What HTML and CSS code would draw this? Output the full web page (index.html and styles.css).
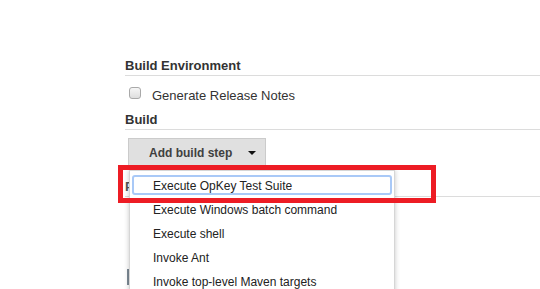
FILE: index.html
```html
<html>
<head>
<meta charset="utf-8">
<title>Build configuration</title>
<link rel="stylesheet" href="styles.css">
</head>
<body>
<div class="config">
<div class="section-header first">Build Environment</div>
<div class="option-row">
<input type="checkbox" class="checkbox" id="relnotes">
<label for="relnotes">Generate Release Notes</label>
</div>
<div class="section-header">Build</div>
<div class="button-row">
<span class="build-button">Add build step<span class="arrow"></span></span>
<div class="step-menu">
<div class="menu-item focused">Execute OpKey Test Suite</div>
<div class="menu-item">Execute Windows batch command</div>
<div class="menu-item">Execute shell</div>
<div class="menu-item">Invoke Ant</div>
<div class="menu-item">Invoke top-level Maven targets</div>
</div>
<div class="highlight"></div>
</div>
<div class="section-header post">Post-build Actions</div>
<div class="post-row"><span class="post-button"></span></div>
</div>
</body>
</html>
```

FILE: styles.css
```css
body{
margin:0;
font-family:"Liberation Sans",Arial,sans-serif;
color:#333;
background:#fff;
}
.config{
margin-left:125px;
padding-top:57px;
}
.section-header{
font-size:13px;
font-weight:bold;
line-height:18px;
padding-bottom:0;
border-bottom:1px solid #dcdcdc;
color:#333;
}
.option-row{
display:flex;
align-items:flex-start;
margin-top:11px;
margin-left:4px;
height:16px;
margin-bottom:8px;
}
.checkbox{
appearance:none;
margin:0;
width:12px;
height:12px;
border:1px solid #a9a9a9;
border-radius:3px;
background:linear-gradient(#f6f6f6,#dedede);
}
.option-row label{
font-size:13px;
line-height:18px;
margin-left:11px;
color:#333;
}
.button-row{
position:relative;
margin-top:8px;
margin-left:3px;
height:28px;
}
.build-button{
display:flex;
align-items:center;
box-sizing:border-box;
width:138px;
height:28px;
padding-left:20px;
padding-top:1px;
background:#e0e0e0;
border:1px solid #cbcbcb;
font-size:12px;
font-weight:bold;
color:#404040;
}
.arrow{
margin-left:auto;
margin-right:9px;
width:0;
height:0;
border-left:4px solid transparent;
border-right:4px solid transparent;
border-top:4px solid #111;
}
.step-menu{
position:absolute;
top:32px;
left:1px;
width:266px;
height:130px;
box-sizing:border-box;
background:#fff;
border:1px solid #d6d6d6;
box-shadow:0 0 5px rgba(0,0,0,0.22);
padding:4px 2px 0 2px;
display:flex;
flex-direction:column;
gap:4px;
z-index:2;
}
.menu-item{
height:20px;
line-height:23px;
padding-left:21px;
font-size:12px;
color:#222;
white-space:nowrap;
}
.menu-item.focused{
outline:2px solid #a9c9f7;
outline-offset:-2px;
border-radius:3px;
}
.highlight{
position:absolute;
top:27px;
left:-10px;
width:318px;
height:38px;
box-sizing:border-box;
border:5px solid #ed1c24;
z-index:3;
}
.section-header.post{
margin-top:12px;
color:#555;
}
.post-row{
margin-top:72px;
margin-left:2px;
}
.post-button{
display:block;
width:2px;
height:16px;
background:#7d8b96;
}
```
